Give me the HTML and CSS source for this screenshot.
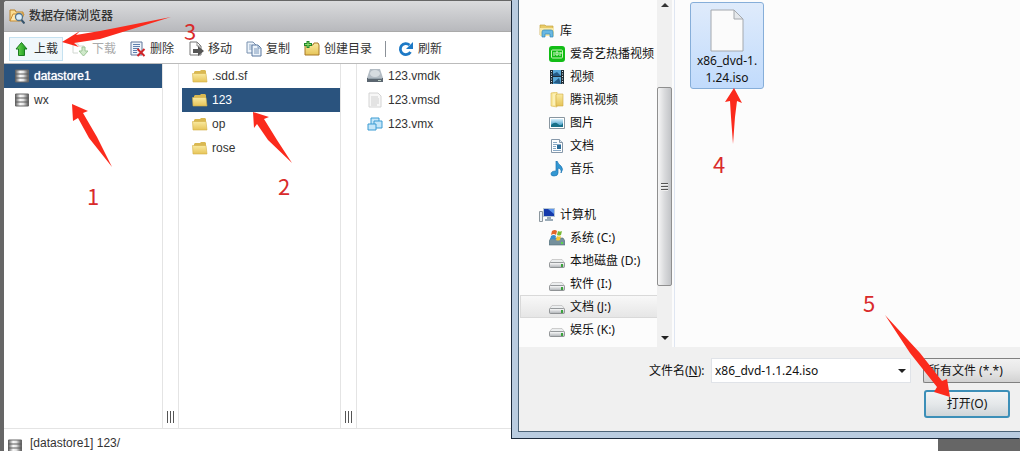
FILE: index.html
```html
<!DOCTYPE html>
<html lang="zh-CN">
<head>
<meta charset="utf-8">
<title>数据存储浏览器</title>
<link rel="stylesheet" href="styles.css">
</head>
<body>
<svg class="defs" aria-hidden="true">
  <defs>
    <linearGradient id="metal"><stop offset="0" stop-color="#666"/><stop offset=".35" stop-color="#fafafa"/><stop offset=".6" stop-color="#e4e4e4"/><stop offset="1" stop-color="#555"/></linearGradient>
    <linearGradient id="gold" x2="0" y2="1"><stop offset="0" stop-color="#faeaa0"/><stop offset="1" stop-color="#e6c458"/></linearGradient>
    <linearGradient id="green" x2="1" y2="0"><stop offset="0" stop-color="#77dc55"/><stop offset="1" stop-color="#11941a"/></linearGradient>
    <linearGradient id="sky" x2="0" y2="1"><stop offset="0" stop-color="#d5effb"/><stop offset="1" stop-color="#2189bd"/></linearGradient>
    <linearGradient id="gray" x2="0" y2="1"><stop offset="0" stop-color="#fff"/><stop offset="1" stop-color="#adb1b5"/></linearGradient>
    <symbol id="store" viewBox="0 0 16 16"><path d="M1.500 2h13v12h-13z" fill="url(#metal)" stroke="#666"/><path d="M1 6h14M1 10h14" stroke="#5c5c5c"/></symbol>
    <symbol id="folder" viewBox="0 0 16 16"><path d="M2 5V4l1-1h5l1-1h4l1 1v9H2z" fill="#d9b851"/><path d="M0.500 5.500h13.500l1 8.500H1z" fill="url(#gold)" stroke="#d4b047" stroke-width=".6"/></symbol>
    <symbol id="page" viewBox="0 0 16 16"><path d="M2 1h9l3 3v11H2z" fill="#f7f7f7" stroke="#d4d4d4"/><path d="M4 5h7M4 7h8M4 9h8M4 11h8M4 13h6" stroke="#cfcfcf"/></symbol>
    <symbol id="drive" viewBox="0 0 16 16"><path d="M3 6.500h10l3 4H0z" fill="#eceeef" stroke="#bbb" stroke-width=".7"/><path d="M1.500 9.500h13q1 0 1 1v3q0 1-1 1h-13q-1 0-1-1v-3q0-1 1-1z" fill="url(#gray)" stroke="#7d8184" stroke-width=".8"/><path d="M12 11h2v3h-2z" fill="#3ca33d"/></symbol>
  </defs>
</svg>

<main class="browser">
  <header class="titlebar">
    <svg class="icon" viewBox="0 0 16 16"><path d="M1 13V2h5l1 2h7v2" fill="#f9dc91" stroke="#bd852d"/><path d="M1 13L4 6h11l-3 7z" fill="#ffe9ad" stroke="#c88b30"/><circle cx="10" cy="9" r="3.500" fill="#d9eefa" stroke="#54748c" stroke-width="1.300"/><path d="M12.500 12l3 3.500" stroke="#36536b" stroke-width="2"/></svg>
    <h1>数据存储浏览器</h1>
  </header>

  <nav class="toolbar" aria-label="工具栏">
    <button class="tool hot"><svg class="icon" viewBox="0 0 16 16"><path d="M7.500 1.500L13 8h-2.500v6.500h-6V8H2z" fill="url(#green)" stroke="#1d7b22"/></svg>上载</button>
    <button class="tool" disabled><svg class="icon" viewBox="0 0 16 16"><path d="M6 12H1V3h5l1 2h5v3" fill="none" stroke="#d2d8d2"/><path d="M10 6h3v4h3l-4.500 5L7 10h3z" fill="#cfe9ca" stroke="#9cc596"/></svg>下载</button>
    <button class="tool"><svg class="icon" viewBox="0 0 16 16"><path d="M1 1h11v13H1z" fill="#eff4fa" stroke="#60779b"/><path d="M3 3.500h7M3 5.500h7M3 7.500h6M3 9.500h4M3 11.500h4" stroke="#5f7fae"/><path d="M7.500 8l7 7M14.500 8l-7 7" stroke="#d12427" stroke-width="2"/></svg>删除</button>
    <button class="tool"><svg class="icon" viewBox="0 0 16 16"><path d="M2 1h7l4 4v9H2z" fill="#fff" stroke="#777"/><path d="M9 1v4h4" fill="none" stroke="#888"/><path d="M5 8h5V5l6 5-6 5v-3H5z" fill="#555"/></svg>移动</button>
    <button class="tool"><svg class="icon" viewBox="0 0 16 16"><path d="M1 1h6l3 3v8H1z" fill="#edf4fb" stroke="#7890ae"/><path d="M3 4h3M3 6h3M3 8h3" stroke="#94aac4"/><path d="M6 4h6l3 3v8H6z" fill="#edf4fb" stroke="#58769e"/><path d="M12 4v3h3M8 8h5M8 10h5M8 12h5" fill="none" stroke="#7d98ba"/></svg>复制</button>
    <button class="tool"><svg class="icon" viewBox="0 0 16 16"><path d="M1 14V4h8l1-2h4l1 2v10z" fill="url(#gold)" stroke="#a87926"/><path d="M4 0v7M0 3.500h8" stroke="#21852a" stroke-width="3"/><path d="M4 1v5M1 3.500h6" stroke="#8be06b"/></svg>创建目录</button>
    <span class="divider"></span>
    <button class="tool"><svg class="icon" viewBox="0 0 16 16"><path d="M11.500 4A5.500 5.500 0 1 0 12.500 11" fill="none" stroke="#1d79c6" stroke-width="2.800"/><path d="M15 1v7H8z" fill="#1d79c6"/></svg>刷新</button>
  </nav>

  <section class="columns">
    <ul class="list stores">
      <li class="selected"><svg class="icon"><use href="#store"/></svg>datastore1</li>
      <li><svg class="icon"><use href="#store"/></svg>wx</li>
    </ul>
    <div class="resizer"><span class="grip"></span></div>
    <ul class="list folders">
      <li><svg class="icon"><use href="#folder"/></svg>.sdd.sf</li>
      <li class="selected"><svg class="icon"><use href="#folder"/></svg>123</li>
      <li><svg class="icon"><use href="#folder"/></svg>op</li>
      <li><svg class="icon"><use href="#folder"/></svg>rose</li>
    </ul>
    <div class="resizer"><span class="grip"></span></div>
    <ul class="list files">
      <li><svg class="icon" viewBox="0 0 16 16"><path d="M3 1h10l3 9H0z" fill="#b3bcc4"/><ellipse cx="8" cy="5.500" rx="5" ry="3.500" fill="#d6dce0"/><path d="M0 10h16v4H0z" fill="#5b6670"/><path d="M1 10.500h14" stroke="#95a2ab"/><path d="M11 12.500h3" stroke="#bcd0c2"/></svg>123.vmdk</li>
      <li><svg class="icon"><use href="#page"/></svg>123.vmsd</li>
      <li><svg class="icon" viewBox="0 0 16 16"><g fill="#c4e6f9" stroke="#3a9bd3"><path d="M4 2h8v7H4z"/><path d="M7 5h8v7H7z"/><path d="M1 8h8v6H1z"/></g></svg>123.vmx</li>
    </ul>
  </section>

  <footer class="path"><svg class="icon"><use href="#store"/></svg>[datastore1] 123/</footer>
</main>

<section class="dialog" role="dialog" aria-label="打开">
  <div class="dialog-body">
    <div class="places">
      <ul class="tree">
        <li class="group"><svg class="icon" viewBox="0 0 16 16"><path d="M1 12V2h5l1 1h7v9z" fill="#e8cb68" stroke="#c6a440" stroke-width=".7"/><path d="M1 5h14v8H1z" fill="#f8e9a8"/><path d="M3 14V9q0-2 2-2h7q2 0 2 2v5h-3v-3H6v3z" fill="#69b8e2" stroke="#3488b8" stroke-width=".7"/></svg>库</li>
        <li><svg class="icon" viewBox="0 0 16 16"><rect width="16" height="16" rx="3" fill="#12bd16"/><rect x="2.500" y="4" width="11" height="8" rx="1" fill="none" stroke="#c8f5b9"/><path d="M5 6v4M7 6h2v3H7zM11 6v4M12 6v2" fill="none" stroke="#dcfbd0"/></svg>爱奇艺热播视频</li>
        <li><svg class="icon" viewBox="0 0 16 16"><path d="M1 1h14v14H1z" fill="#202d36"/><path d="M4 1h8v6H4zM4 8h8v7H4z" fill="#5aa9d8"/><path d="M4 5l4-2 4 4H4zM4 14l6-5 2 6z" fill="#245b86"/><path d="M2.500 2v13M13.500 2v13" stroke="#dde3e7" stroke-dasharray="1 1.500"/></svg>视频</li>
        <li><svg class="icon" viewBox="0 0 16 16"><path d="M2 1l6-1v15l-6-1z" fill="#f9e89b" stroke="#d8b64e" stroke-width=".6"/><path d="M8 2h6v12H7V3z" fill="url(#gold)" stroke="#cda943" stroke-width=".6"/><path d="M5 2v11" stroke="#fff8d2"/></svg>腾讯视频</li>
        <li><svg class="icon" viewBox="0 0 16 16"><path d="M0.500 2.500h15v11H.5z" fill="#fff" stroke="#8996a0"/><path d="M2 4h12v8H2z" fill="url(#sky)"/><path d="M2 10q4-4 7-1t5-1v4H2z" fill="#187088"/></svg>图片</li>
        <li><svg class="icon" viewBox="0 0 16 16"><path d="M2.500 1.500h8l3 3v10h-11z" fill="#fff" stroke="#8698aa"/><path d="M10.500 1.500v3h3" fill="#dce7ef" stroke="#8698aa"/><path d="M4 4.500h4M4 6.500h8M4 8.500h3M4 10.500h3M4 12.500h8" stroke="#8aaac6"/><path d="M8 7h4v4H8z" fill="#2b6c98"/></svg>文档</li>
        <li><svg class="icon" viewBox="0 0 16 16"><path d="M8 0q1 3 4 5 3 3 0 7 1-4-3-5v5q0 3-4 3-3 0-3-2 0-3 5-3V0z" fill="#3398d3" stroke="#1d74b1" stroke-width=".7"/></svg>音乐</li>
      </ul>
      <ul class="tree">
        <li class="group"><svg class="icon" viewBox="0 0 16 16"><path d="M0.500 4.500h3v10h-3z" fill="#edf1f4" stroke="#8b969e"/><path d="M4 1h12v9H4z" fill="#b8c8d5"/><path d="M5 2h10v7H5z" fill="#153aab"/><path d="M9 2h6v5z" fill="#5d95ed"/><path d="M8 10h4v2h2v2H6v-2h2z" fill="#9aabb8"/></svg>计算机</li>
        <li><svg class="icon" viewBox="0 0 16 16"><path d="M2 8h12l2 3v4H0v-4z" fill="#75909c" stroke="#526b76" stroke-width=".6"/><path d="M12 12h2v2h-2z" fill="#5bd64c"/><path d="M3 1q3-2 5 0L7 5Q5 3 2 5z" fill="#e36428"/><path d="M9 1q2 1 4 0l-1 4q-2 1-4 0z" fill="#78b833"/><path d="M2 6q3-2 5 0l-1 4q-2-2-5 0z" fill="#388ccc"/><path d="M8 6q2 1 4 0l-1 4q-2 1-4 0z" fill="#f5c632"/></svg>系统 (C:)</li>
        <li><svg class="icon"><use href="#drive"/></svg>本地磁盘 (D:)</li>
        <li><svg class="icon"><use href="#drive"/></svg>软件 (I:)</li>
        <li class="current"><svg class="icon"><use href="#drive"/></svg>文档 (J:)</li>
        <li><svg class="icon"><use href="#drive"/></svg>娱乐 (K:)</li>
      </ul>
    </div>
    <div class="scrollbar">
      <span class="arrow up"></span>
      <div class="track"><div class="thumb"><span class="ridges"></span></div></div>
      <span class="arrow down"></span>
    </div>
    <div class="filepane">
      <figure class="file">
        <svg class="file-icon" viewBox="0 0 34 43"><path d="M1 1h23l9 9v32H1z" fill="#fbfbfb" stroke="#a4a8ad"/><path d="M24 1v9h9z" fill="#e5e8eb" stroke="#a4a8ad"/></svg>
        <figcaption>x86_dvd-1.<br>1.24.iso</figcaption>
      </figure>
    </div>
  </div>
  <form class="dialog-form">
    <div class="name-row">
      <label for="filename">文件名(<u>N</u>):</label>
      <div class="combo"><input id="filename" type="text" value="x86_dvd-1.1.24.iso"><button type="button" class="drop" aria-label="历史"><span class="arrow down"></span></button></div>
      <select class="filter" aria-label="文件类型"><option>所有文件 (*.*)</option></select>
    </div>
    <button type="button" class="open">打开(O)</button>
  </form>
</section>

<svg class="notes" viewBox="0 0 1020 451">
  <g class="pointers">
    <path d="M72 104L88 111 83 113 97 137 112 167 89 138 78 118 73 121z"/>
    <path d="M253 112L269 117 264 119 277 140 292 163 268 140 257 124 254 128z"/>
    <path d="M62 42L80 31 76 35 100 31 171 17 100 39 74 43 79 47z"/>
    <path d="M734 88L742 103 737 101 735 117 733 144 731 117 730 101 725 102z"/>
    <path d="M950 397L947 379 942 381 920 353 885 315 910 353 937 387 934 392z"/>
  </g>
  <g class="numbers">
    <text x="87" y="205">1</text>
    <text x="278" y="195">2</text>
    <text x="184" y="40">3</text>
    <text x="713" y="173">4</text>
    <text x="863" y="312">5</text>
  </g>
</svg>
</body>
</html>
```

FILE: styles.css
```css
* { box-sizing: border-box; }

body {
  margin: 0;
  height: 100vh;
  overflow: hidden;
  position: relative;
  background: #666;
  padding: 1px 82px 0 4px;
  font: 12px/16px "Liberation Sans", "Noto Sans CJK SC", sans-serif;
  color: #333;
}

ul, h1, figure { margin: 0; padding: 0; list-style: none; }
button, input, select { font: inherit; color: inherit; }
.defs { position: absolute; width: 0; height: 0; }
.icon { width: 16px; height: 16px; flex: none; }

.browser {
  height: 100%;
  display: flex;
  flex-direction: column;
  background: #fff;
  border-radius: 3px 3px 0 0;
}

.titlebar {
  height: 31px;
  flex: none;
  display: flex;
  align-items: center;
  gap: 4px;
  padding: 0 5px;
  background: linear-gradient(#dadbdd, #b8b9bd);
  border-bottom: 1px solid #aaa;
  border-radius: 3px 3px 0 0;
}
.titlebar h1 { font-size: 12px; font-weight: 500; }

.toolbar {
  height: 32px;
  flex: none;
  display: flex;
  align-items: center;
  gap: 4px;
  padding: 2px 5px 0;
  border-bottom: 1px solid #bbb;
}
.tool {
  display: flex;
  align-items: center;
  gap: 4px;
  height: 24px;
  padding: 0 4px;
  border: 1px solid transparent;
  background: none;
  white-space: nowrap;
}
.tool.hot { background: #f0f7fb; border-color: #c5e1f0; }
.tool:disabled { color: #aaa; }
.divider { width: 1px; height: 16px; margin: 0 3px 0 4px; background: #8b9198; }

.columns { flex: 1; display: flex; min-height: 0; }
.list { flex: none; }
.list li { height: 24px; display: flex; align-items: center; }
.list .selected { background: #2a537e; color: #fff; }
.stores { width: 158px; }
.stores li { padding-left: 10px; gap: 4px; }
.stores .selected { text-shadow: 0 0 1px #fff; }
.folders { width: 161px; padding-left: 3px; }
.folders li { padding-left: 10px; gap: 4px; }
.files { flex: 1; }
.files li { padding-left: 10px; gap: 5px; }
.resizer {
  width: 17px;
  flex: none;
  display: flex;
  align-items: flex-end;
  justify-content: center;
  padding-bottom: 5px;
  border: solid #e4e4e4;
  border-width: 0 1px;
}
.grip {
  width: 7px;
  height: 12px;
  background: repeating-linear-gradient(90deg, #555 0 1px, transparent 1px 3px);
}

.path {
  height: 23px;
  flex: none;
  display: flex;
  align-items: flex-end;
  gap: 7px;
  padding-left: 3px;
  border-top: 1px solid #e4e4e4;
}
.path .icon { margin-bottom: -3px; }

.dialog {
  position: absolute;
  top: 0;
  right: 0;
  left: 512px;
  background: #f0f0f0;
  border: solid #b9cce0;
  border-width: 0 0 6px 6px;
  box-shadow: -1px 1px #1c2b3c, inset 1px -1px #4c6478;
  color: #111;
  font-family: "Noto Sans", "Noto Sans CJK SC", sans-serif;
}
.dialog-body { display: flex; height: 347px; margin-left: 1px; background: #fcfcfc; }
.places { width: 138px; flex: none; padding: 19px 0 6px 1px; }
.tree + .tree { margin-top: 23px; }
.tree li {
  height: 23px;
  display: flex;
  align-items: center;
  gap: 5px;
  padding-left: 29px;
  white-space: nowrap;
}
.tree .group { padding-left: 19px; }
.tree .current {
  background: linear-gradient(#f8f8f8, #e6e6e6);
  border: 1px solid #d9d9d9;
  border-right: 0;
  padding-left: 28px;
}

.scrollbar {
  width: 15px;
  flex: none;
  display: flex;
  flex-direction: column;
  align-items: center;
  padding: 3px 0 7px;
  background: #f0f0f0;
}
.arrow { width: 0; height: 0; flex: none; border: solid transparent; border-width: 0 4px; }
.arrow.up { border-bottom: 4px solid #333; }
.arrow.down { border-top: 4px solid #222; }
.track { flex: 1; width: 100%; display: flex; flex-direction: column; padding: 80px 0 50px; }
.thumb {
  flex: 1;
  display: flex;
  align-items: center;
  justify-content: center;
  border: 1px solid #8f8f8f;
  border-radius: 2px;
  background: linear-gradient(90deg, #f6f6f6, #d9dadc 50%, #c2c4c7);
}
.ridges {
  width: 7px;
  height: 8px;
  background: repeating-linear-gradient(#555 0 1px, #eee 1px 2px, transparent 2px 3px);
}

.filepane {
  flex: 1;
  margin-left: 2px;
  padding: 2px 15px;
  border-left: 1px solid #dfe6f2;
}
.file {
  width: 74px;
  height: 87px;
  padding-top: 6px;
  display: flex;
  flex-direction: column;
  align-items: center;
  border: 1px solid #86aed9;
  border-radius: 3px;
  background: linear-gradient(#dfebfb, #c1dbfc);
  text-align: center;
  line-height: 17px;
}
.file-icon { width: 34px; height: 43px; }

.dialog-form {
  display: flex;
  flex-direction: column;
  gap: 7px;
  padding: 11px 0 14px 131px;
}
.name-row { display: flex; align-items: center; }
.name-row label { width: 62px; flex: none; white-space: nowrap; }
.combo {
  flex: 1;
  height: 25px;
  display: flex;
  margin-right: 12px;
  background: #fff;
  border: 1px solid #e0e3e8;
}
.combo input { flex: 1; min-width: 0; padding: 0 3px; border: 0; background: none; }
.drop { padding: 0 4px; border: 0; background: none; display: flex; align-items: center; }
.filter {
  width: 97px;
  height: 25px;
  flex: none;
  appearance: none;
  padding: 0 4px;
  border: 1px solid #808080;
  border-right: 0;
  border-radius: 2px 0 0 2px;
  background: linear-gradient(#f1f1f1, #e6e6e6 50%, #d2d2d2);
}
.open {
  align-self: flex-end;
  width: 86px;
  height: 28px;
  margin-right: 10px;
  padding: 0;
  border: 2px solid #3c8fb8;
  border-radius: 3px;
  background: linear-gradient(#f2f4f5, #e5e8ea 50%, #cfd5d8);
}

.notes { position: absolute; left: 0; top: 0; width: 1020px; height: 451px; pointer-events: none; }
.pointers { fill: #fb2a1c; }
.numbers { fill: #d92b2b; font: 22px "Noto Sans CJK SC", sans-serif; }
```
